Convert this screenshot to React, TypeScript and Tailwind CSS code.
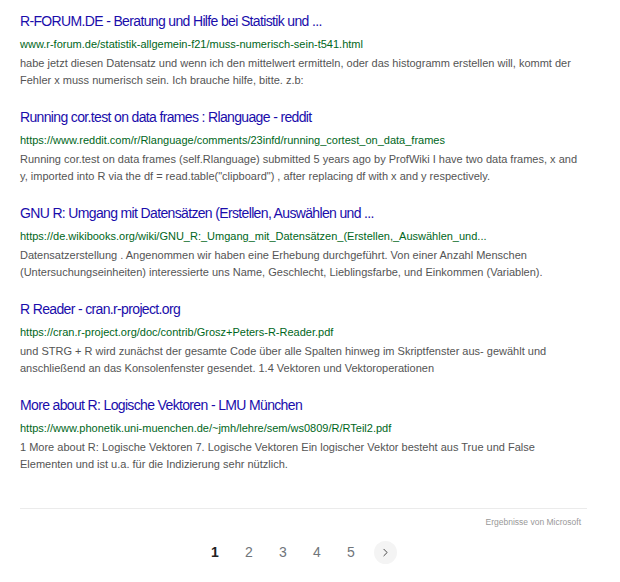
import { ChevronRight } from 'lucide-react';

const results = [
  {
    title: 'R-FORUM.DE - Beratung und Hilfe bei Statistik und ...',
    url: 'www.r-forum.de/statistik-allgemein-f21/muss-numerisch-sein-t541.html',
    snippet:
      'habe jetzt diesen Datensatz und wenn ich den mittelwert ermitteln, oder das histogramm erstellen will, kommt der Fehler x muss numerisch sein. Ich brauche hilfe, bitte. z.b:',
  },
  {
    title: 'Running cor.test on data frames : Rlanguage - reddit',
    url: 'https://www.reddit.com/r/Rlanguage/comments/23infd/running_cortest_on_data_frames',
    snippet:
      'Running cor.test on data frames (self.Rlanguage) submitted 5 years ago by ProfWiki I have two data frames, x and y, imported into R via the df = read.table("clipboard") , after replacing df with x and y respectively.',
  },
  {
    title: 'GNU R: Umgang mit Datensätzen (Erstellen, Auswählen und ...',
    url: 'https://de.wikibooks.org/wiki/GNU_R:_Umgang_mit_Datensätzen_(Erstellen,_Auswählen_und...',
    snippet:
      'Datensatzerstellung . Angenommen wir haben eine Erhebung durchgeführt. Von einer Anzahl Menschen (Untersuchungseinheiten) interessierte uns Name, Geschlecht, Lieblingsfarbe, und Einkommen (Variablen).',
  },
  {
    title: 'R Reader - cran.r-project.org',
    url: 'https://cran.r-project.org/doc/contrib/Grosz+Peters-R-Reader.pdf',
    snippet:
      'und STRG + R wird zunächst der gesamte Code über alle Spalten hinweg im Skriptfenster aus- gewählt und anschließend an das Konsolenfenster gesendet. 1.4 Vektoren und Vektoroperationen',
  },
  {
    title: 'More about R: Logische Vektoren - LMU München',
    url: 'https://www.phonetik.uni-muenchen.de/~jmh/lehre/sem/ws0809/R/RTeil2.pdf',
    snippet:
      '1 More about R: Logische Vektoren 7. Logische Vektoren Ein logischer Vektor besteht aus True und False Elementen und ist u.a. für die Indizierung sehr nützlich.',
  },
];

export default function App() {
  return (
    <div className="bg-white min-h-screen font-['Liberation_Sans',Arial,sans-serif]">
      <div className="w-[567px] ml-[20px] pt-[11px]">
        <div className="flex flex-col gap-[18px]">
          {results.map((r) => (
            <div key={r.url}>
              <a
                href="#"
                className="block text-[14px] tracking-[-0.65px] leading-[20px] text-[#1a0dab] mb-[5px] whitespace-nowrap"
              >
                {r.title}
              </a>
              <div className="text-[11px] leading-[16px] text-[#006621] mb-[3px] whitespace-nowrap">{r.url}</div>
              <p className="text-[11px] leading-[17px] text-[#545454]">{r.snippet}</p>
            </div>
          ))}
        </div>
        <div className="mt-[35px] border-t border-[#ebebeb]" />
        <div className="text-right text-[8.5px] leading-[12px] text-[#999] mt-[7px] pr-[6px]">Ergebnisse von Microsoft</div>
        <div className="flex items-center justify-center mt-[13px] pr-[7px]">
          {[1, 2, 3, 4, 5].map((n) => (
            <span
              key={n}
              className={
                n === 1
                  ? 'w-[34px] text-center text-[14px] text-[#222] font-bold'
                  : 'w-[34px] text-center text-[14px] text-[#70757a]'
              }
            >
              {n}
            </span>
          ))}
          <span className="w-[34px] flex justify-center">
            <span className="w-[23px] h-[23px] rounded-full bg-[#f4f4f4] flex items-center justify-center text-[#444]">
              <ChevronRight size={13} strokeWidth={1.8} />
            </span>
          </span>
        </div>
      </div>
    </div>
  );
}
